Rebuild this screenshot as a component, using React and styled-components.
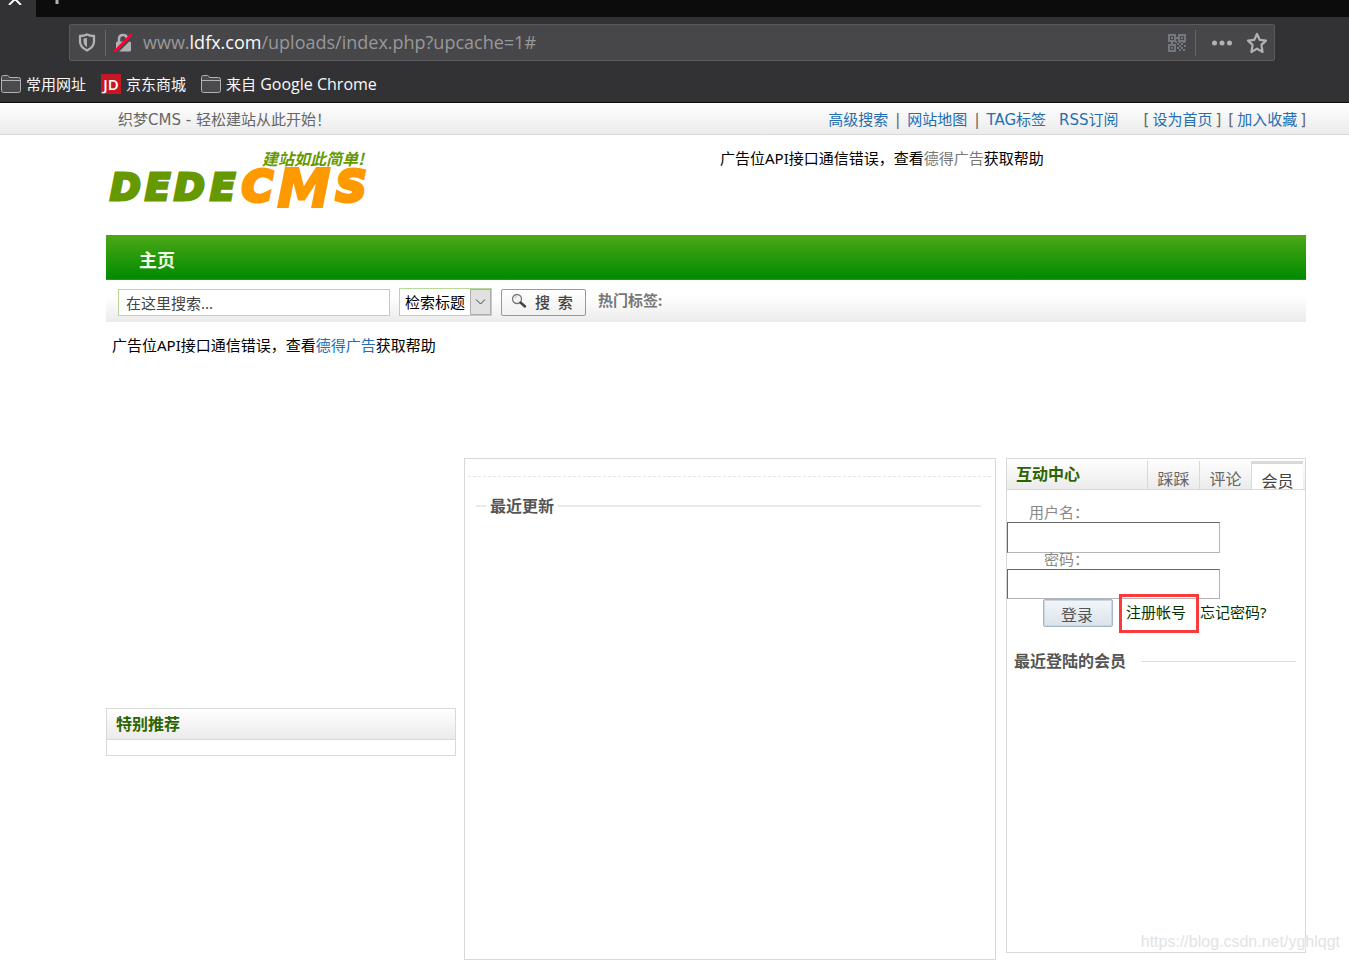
import React from 'react';
import styled, { createGlobalStyle } from 'styled-components';

const GlobalStyle = createGlobalStyle`
* { box-sizing:border-box; }

body {
margin:0;
background:#fff;
color:#000;
font-family:"Noto Sans", "Noto Sans CJK SC", sans-serif;
font-size:15px;
line-height:20px;
}

a { color:inherit; text-decoration:none; }
button, input, select { font-family:inherit; margin:0; }
h2, h3 { margin:0; }
`;

/* browser bar */

const Browser = styled.header`
background:#323234;
color:#f9f9fa;
height:103px;
border-bottom:1px solid #0c0c0d;
font-family:"Open Sans", "Noto Sans CJK SC", sans-serif;
`;

const TabStrip = styled.div`
display:flex;
height:17px;
background:#0c0c0d;
`;

const TabButton = styled.button`
display:flex;
align-items:flex-start;
justify-content:${p => p.$active ? 'flex-start' : 'center'};
width:${p => p.$active ? '36px' : '42px'};
padding:0 0 0 ${p => p.$active ? '8px' : '0'};
border:0;
background:${p => p.$active ? '#323234' : 'transparent'};
`;

const AddressRow = styled.div`
padding:7px 74px 0 69px;
`;

const AddressBar = styled.div`
display:flex;
align-items:center;
height:37px;
padding:0 6px 0 8px;
border:1px solid #5b5b5e;
border-radius:2px;
background:#474749;
`;

const IconButton = styled.button`
display:flex;
padding:0;
border:0;
background:transparent;
margin-left:${p => p.$left || 0}px;
`;

const Divider = styled.span`
width:1px;
height:26px;
background:#66666c;
margin:0 8px 0 9px;
`;

const Url = styled.div`
flex:1;
margin-left:11px;
padding-bottom:2px;
color:#98989b;
font-size:18px;
line-height:24px;
white-space:nowrap;
b { color:#f9f9fa; font-weight:400; }
`;

const Bookmarks = styled.nav`
display:flex;
align-items:center;
gap:15px;
height:46px;
padding-left:1px;
`;

const Bookmark = styled.a`
display:flex;
align-items:center;
gap:5px;
font-size:${p => p.$latin ? '16px' : '15px'};
span { font-size:15px; }
`;

const Jd = styled.i`
width:20px;
height:20px;
background:#c91623;
color:#fff;
font:600 15px/21px "Open Sans", sans-serif;
text-align:center;
`;

/* site header */

const TopBar = styled.div`
display:flex;
justify-content:space-between;
align-items:center;
height:32px;
padding:2px 43px 0 118px;
border-bottom:1px solid #d8d8d8;
background:linear-gradient(#fff, #ebebeb);
color:#666;
font-family:"DejaVu Sans", "Noto Sans CJK SC", sans-serif;
white-space:nowrap;
`;

const TopLinks = styled.div`
display:flex;
gap:7px;
a { color:#256eb1; }
`;

const LinkGroup = styled.span`
display:flex;
gap:${p => p.$gap}px;
margin-right:${p => p.$right || 0}px;
`;

const Page = styled.main`
padding:0 43px 0 106px;
`;

const Banner = styled.div`
display:flex;
height:100px;
`;

const LogoLink = styled.a`
flex:0 0 614px;
padding-top:8px;
svg { display:block; }
`;

const AdText = styled.p`
margin:0;
padding-top:${p => p.$top}px;
a { color:${p => p.$link}; }
`;

const Nav = styled.nav`
height:45px;
padding:0 33px;
border-bottom:1px solid #25952a;
background:linear-gradient(#4ca816, #008a00);
color:#f0fbe8;
font-size:18px;
font-weight:700;
line-height:50px;
`;

const SearchForm = styled.form`
display:flex;
align-items:center;
height:42px;
padding:2px 12px 0;
background:linear-gradient(#fff 40%, #ebebeb);
`;

const SearchInput = styled.input`
width:272px;
height:27px;
padding:0 7px;
border:1px solid #b7d896;
background:#fff;
color:#444;
font-size:15px;
`;

const SelectBox = styled.div`
position:relative;
width:93px;
height:28px;
margin:0 9px;
border:1px solid #b7d896;
background:#fff;
svg { position:absolute; right:0; top:0; pointer-events:none; }
`;

const Select = styled.select`
appearance:none;
width:100%;
height:26px;
padding:0 0 0 5px;
border:0;
background:transparent;
color:#000;
font-size:15px;
`;

const SearchButton = styled.button`
display:flex;
align-items:center;
gap:8px;
width:85px;
height:27px;
padding:0 0 2px 9px;
border:1px solid #999;
border-radius:2px;
background:linear-gradient(#fff, #f0f0f0);
color:#444;
font-size:15px;
font-weight:500;
white-space:pre;
`;

const HotTags = styled.strong`
margin-left:12px;
padding-bottom:4px;
color:#777;
`;

const AdSlot = styled.div`
height:136px;
padding:0 6px;
`;

/* columns */

const Columns = styled.div`
display:flex;
align-items:flex-start;
`;

const LeftColumn = styled.section`
flex:0 0 350px;
padding-top:250px;
`;

const Panel = styled.section`
border:1px solid #d9d9d9;
min-height:${p => p.$min || 0}px;
`;

const CenterPanel = styled(Panel)`
flex:1;
margin:0 10px 0 8px;
padding:17px 4px 0 3px;
`;

const RightPanel = styled(Panel)`
flex:0 0 300px;
`;

const PanelHead = styled.div`
display:flex;
justify-content:space-between;
height:31px;
padding:0 2px 0 9px;
border-bottom:1px solid #d9d9d9;
background:linear-gradient(#fff, #ebebeb);
`;

const PanelTitle = styled.h2`
color:#2c6400;
font-size:16px;
font-weight:700;
line-height:31px;
`;

const Tabs = styled.div`
display:flex;
padding-top:2px;
`;

const PanelTab = styled.button`
display:flex;
justify-content:center;
width:52px;
padding:${p => p.$active ? '7px' : '8px'} 0 0;
border:0;
border-left:1px solid #d9d9d9;
border-top:${p => p.$active ? '3px solid #d9d9d9' : '0'};
background:${p => p.$active ? '#fff' : 'transparent'};
color:${p => p.$active ? '#444' : '#666'};
font-size:16px;
line-height:20px;
`;

const Dashed = styled.div`
border-top:1px dashed #e6e6e6;
`;

const RuleTitle = styled.h3`
display:flex;
align-items:center;
gap:${p => p.$gap}px;
margin:${p => p.$margin};
color:#555;
font-size:16px;
line-height:20px;
&::before {
content:"";
width:10px;
border-top:2px solid #e9e9e9;
display:${p => p.$lead ? 'block' : 'none'};
}
&::after {
content:"";
flex:1;
border-top:${p => p.$lead ? '2px solid #e9e9e9' : '1px solid #ddd'};
}
`;

const LoginForm = styled.form`
display:flex;
flex-direction:column;
align-items:flex-start;
padding-top:12px;
`;

const Label = styled.label`
width:82px;
height:${p => p.$height}px;
color:#888;
line-height:${p => p.$line}px;
text-align:right;
`;

const TextInput = styled.input`
width:213px;
height:${p => p.$height}px;
border:1px solid #b5b5b5;
border-top-color:#666;
border-left-color:#666;
background:#fff;
`;

const LoginRow = styled.div`
display:flex;
padding-left:36px;
color:#003300;
line-height:27px;
`;

const LoginButton = styled.button`
width:70px;
height:28px;
padding:1px 2px 0 0;
border:1px solid #a5b8ca;
border-radius:2px;
background:linear-gradient(#f3f6f9, #dae3eb);
box-shadow:inset 0 0 0 1px #c8d6e3;
color:#555;
font-size:16px;
`;

const Register = styled.a`
position:relative;
margin:0 14px 0 13px;
`;

const RedBox = styled.span`
position:absolute;
left:-7px;
top:-5px;
width:80px;
height:39px;
border:3px solid #fb3a3c;
pointer-events:none;
`;

const Watermark = styled.div`
position:absolute;
right:9px;
top:932px;
color:#e3e3e3;
font:16px/20px "Liberation Sans", sans-serif;
text-shadow:1px 1px 0 #fff;
`;

const Folder = () => (
    <svg width="20" height="18" viewBox="0 0 20 18" fill="#4b4b4d" stroke="#b1b1b3" strokeWidth="1">
        <path d="M.5 15.5v-13Q.5.5 2.5.5h4q1 0 2 2h9q2 0 2 2v11q0 2-2 2h-15q-2 0-2-2z" />
        <path d="M1 5.5h18" />
    </svg>
)

const Shield = () => (
    <svg width="18" height="20" viewBox="0 0 18 20">
        <path d="M2 3Q6 3 9 1.500 12 3 16 3V8.500q0 5.500-7 9-7-3.500-7-9z" fill="none" stroke="#b1b1b3" strokeWidth="2.300" strokeLinejoin="round" />
        <path d="M9 5v9Q5.500 12 5.500 8.500V5.500z" fill="#b1b1b3" />
    </svg>
)

const BrokenLock = () => (
    <svg width="18" height="20" viewBox="0 0 18 20">
        <path d="M5 9V6q0-4 4-4t4 4v3" fill="none" stroke="#b1b1b3" strokeWidth="2.500" />
        <rect x="2" y="8.500" width="15" height="10" rx="1.500" fill="#b1b1b3" />
        <path d="M2.500 19.500L18.500 3.500" stroke="#474749" strokeWidth="2.500" />
        <path d="M1.300 18L17 2" stroke="#ff0039" strokeWidth="2.500" strokeLinecap="round" />
    </svg>
)

const QrCode = () => (
    <svg width="18" height="18" viewBox="0 0 18 18" fill="#73777f">
        <path fillRule="evenodd" d="M0 0h8v8H0zM2 2v4h4v-4zM10 0h8v8h-8zM12 2v4h4v-4zM0 10h8v8H0zM2 12v4h4v-4z" />
        <path d="M3 3h2v2H3zM13 3h2v2h-2zM3 13h2v2H3zM8 3h2v2H8zM3 8h2v2H3zM7 7h2v2H7zM9 9h2v2H9zM11 7h2v2h-2zM13 9h2v2h-2zM15 7h2v2h-2zM11 11h2v2h-2zM9 13h2v2H9zM13 13h2v2h-2zM16 11h2v2h-2zM11 15h2v2h-2zM15 15h2v2h-2z" />
    </svg>
)

const Dots = () => (
    <svg width="20" height="6" viewBox="0 0 20 6" fill="#b1b1b3">
        <circle cx="2.500" cy="3" r="2.500" />
        <circle cx="10" cy="3" r="2.500" />
        <circle cx="17.500" cy="3" r="2.500" />
    </svg>
)

const Star = () => (
    <svg width="22" height="22" viewBox="0 0 22 22" fill="none" stroke="#b1b1b3" strokeWidth="2.200" strokeLinejoin="round">
        <path d="M11 2l2.700 5.800 6.300.8-4.600 4.300L16.600 20 11 16.600 5.400 20l1.200-7.100L2 8.600l6.300-.8z" />
    </svg>
)

const Magnifier = () => (
    <svg width="16" height="16" viewBox="0 0 16 16" fill="none">
        <circle cx="6" cy="6" r="4.500" fill="#f3f3f3" stroke="#777" strokeWidth="1.300" />
        <path d="M4 5q.5-1.500 2-1.500" stroke="#bbb" />
        <path d="M9.500 9.500l4.500 4" stroke="#444" strokeWidth="2.500" strokeLinecap="round" />
    </svg>
)

const Logo = () => (
    <svg width="280" height="84" viewBox="0 0 280 84" fontFamily="DejaVu Sans" fontWeight="700" fontStyle="italic">
        <text x="156" y="22" fontSize="16" fontFamily="Noto Sans CJK SC" fill="#669900">建站如此简单!</text>
        <g fill="#669900" stroke="#669900" strokeWidth="3" fontSize="37">
            <text x="4" y="57">D</text>
            <text x="39" y="57">E</text>
            <text x="68" y="57">D</text>
            <text x="104" y="57">E</text>
        </g>
        <g fill="#ff9900" stroke="#ff9900" strokeWidth="4">
            <text x="136" y="58" fontSize="42">C</text>
            <text x="171" y="64" fontSize="54" strokeWidth="2">M</text>
            <text x="230" y="58" fontSize="42">S</text>
        </g>
    </svg>
)

const Ad = ({ top, link }) => {
    return <AdText $top={top} $link={link}>
                广告位API接口通信错误，查看<a href="#ad">德得广告</a>获取帮助
            </AdText>
}

const App = () => {
    return <>
        <GlobalStyle />
        <Browser>
            <TabStrip>
                <TabButton $active aria-label="close tab">
                    <svg width="14" height="5" viewBox="0 0 14 5"><path d="M1 5l6-6 6 6" fill="none" stroke="#f9f9fa" strokeWidth="2" /></svg>
                </TabButton>
                <TabButton aria-label="new tab">
                    <svg width="4" height="5" viewBox="0 0 4 5"><path d="M2 0v4" stroke="#b1b1b3" strokeWidth="3" /></svg>
                </TabButton>
            </TabStrip>
            <AddressRow>
                <AddressBar>
                    <IconButton aria-label="protection"><Shield /></IconButton>
                    <Divider />
                    <IconButton aria-label="connection"><BrokenLock /></IconButton>
                    <Url>www.<b>ldfx.com</b>/uploads/index.php?upcache=1#</Url>
                    <IconButton aria-label="qr code"><QrCode /></IconButton>
                    <Divider />
                    <IconButton aria-label="more" $left={8}><Dots /></IconButton>
                    <IconButton aria-label="bookmark" $left={14}><Star /></IconButton>
                </AddressBar>
            </AddressRow>
            <Bookmarks>
                <Bookmark href="#sites"><Folder />常用网址</Bookmark>
                <Bookmark href="#jd"><Jd>JD</Jd>京东商城</Bookmark>
                <Bookmark href="#chrome" $latin><Folder /><div><span>来自</span> Google Chrome</div></Bookmark>
            </Bookmarks>
        </Browser>

        <TopBar>
            <span>织梦CMS - 轻松建站从此开始！</span>
            <TopLinks>
                <LinkGroup $gap={7} $right={6}>
                    <a href="#search">高级搜索</a>|
                    <a href="#map">网站地图</a>|
                    <a href="#tags">TAG标签</a>
                </LinkGroup>
                <LinkGroup $right={18}><a href="#rss">RSS订阅</a></LinkGroup>
                <LinkGroup $gap={3}>[<a href="#home">设为首页</a>]</LinkGroup>
                <LinkGroup $gap={3}>[<a href="#fav">加入收藏</a>]</LinkGroup>
            </TopLinks>
        </TopBar>

        <Page>
            <Banner>
                <LogoLink href="#top" aria-label="DEDECMS"><Logo /></LogoLink>
                <Ad top={13} link="#777" />
            </Banner>
            <Nav><a href="#index">主页</a></Nav>
            <SearchForm onSubmit={e => e.preventDefault()}>
                <SearchInput aria-label="搜索" defaultValue="在这里搜索..." />
                <SelectBox>
                    <Select aria-label="检索范围"><option>检索标题</option></Select>
                    <svg width="21" height="26" viewBox="0 0 21 26">
                        <rect x=".5" y=".5" width="20" height="25" fill="#e1e1e1" stroke="#adadad" />
                        <path d="M6 10.500l4.500 4.500 4.500-4.500" fill="none" stroke="#444" />
                    </svg>
                </SelectBox>
                <SearchButton><Magnifier />搜  索</SearchButton>
                <HotTags>热门标签:</HotTags>
            </SearchForm>
            <AdSlot><Ad top={13} link="#256eb1" /></AdSlot>

            <Columns>
                <LeftColumn>
                    <Panel $min={48}>
                        <PanelHead><PanelTitle>特别推荐</PanelTitle></PanelHead>
                    </Panel>
                </LeftColumn>
                <CenterPanel $min={502}>
                    <Dashed />
                    <RuleTitle $lead $gap={4} $margin="19px 10px 0 8px">最近更新</RuleTitle>
                </CenterPanel>
                <RightPanel $min={495}>
                    <PanelHead>
                        <PanelTitle>互动中心</PanelTitle>
                        <Tabs>
                            <PanelTab>踩踩</PanelTab>
                            <PanelTab>评论</PanelTab>
                            <PanelTab $active>会员</PanelTab>
                        </Tabs>
                    </PanelHead>
                    <LoginForm onSubmit={e => e.preventDefault()}>
                        <Label htmlFor="user" $height={20} $line={20}>用户名：</Label>
                        <TextInput id="user" $height={31} />
                        <Label htmlFor="pwd" $height={16} $line={13}>密码：</Label>
                        <TextInput id="pwd" type="password" $height={30} />
                        <LoginRow>
                            <LoginButton>登录</LoginButton>
                            <Register href="#register">注册帐号<RedBox /></Register>
                            <a href="#forgot">忘记密码?</a>
                        </LoginRow>
                    </LoginForm>
                    <RuleTitle $gap={15} $margin="24px 9px 0 7px">最近登陆的会员</RuleTitle>
                </RightPanel>
            </Columns>
        </Page>
        <Watermark>https://blog.csdn.net/yghlqgt</Watermark>
    </>
}

export default App;
